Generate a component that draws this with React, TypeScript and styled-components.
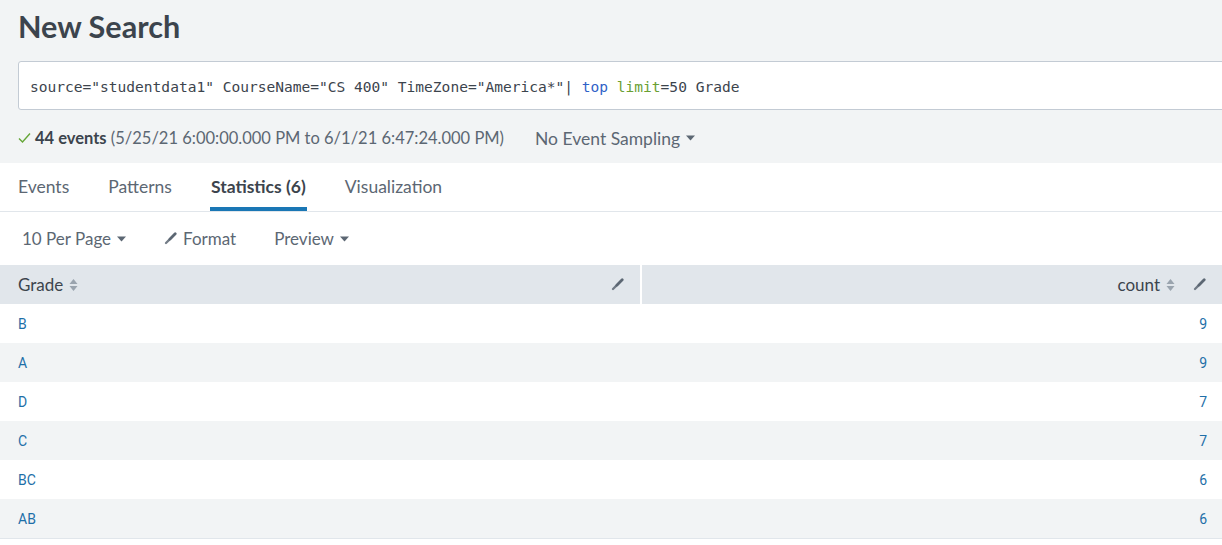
import { Fragment } from 'react';
import { createGlobalStyle, styled } from 'styled-components';

const colors = {
  text: '#3c444d',
  muted: '#5c6773',
  panel: '#f2f4f5',
  header: '#e1e6eb',
  border: '#c3cbd4',
  link: '#1e6fa8',
  accent: '#1a77b5',
  green: '#65a637',
};

const GlobalStyle = createGlobalStyle`
  html, body {
    margin: 0;
    padding: 0;
    background: #fff;
    overflow: hidden;
  }
  body {
    font-family: Lato, "Open Sans", sans-serif;
    color: ${colors.text};
  }
`;

const Page = styled.div`
  width: 1222px;
  overflow: hidden;
`;

const Top = styled.header`
  background: ${colors.panel};
  padding: 8px 0 0 18px;
  height: 155px;
`;

const Title = styled.h1`
  margin: 0;
  font-size: 30.6px;
  font-weight: 700;
  line-height: 38px;
  color: ${colors.text};
`;

const SearchBox = styled.div`
  margin-top: 15px;
  width: 1260px;
  height: 49px;
  box-sizing: border-box;
  background: #fff;
  border: 1px solid ${colors.border};
  border-radius: 3px;
  display: flex;
  align-items: center;
  padding-left: 11px;
  font-family: "DejaVu Sans Mono", monospace;
  font-size: 14.55px;
  color: ${colors.text};
`;

const Query = styled.span`
  white-space: pre;
  padding-top: 1px;
`;

const Token = styled.span<{ $kind: 'cmd' | 'arg' }>`
  color: ${(p) => (p.$kind === 'cmd' ? '#2f62c8' : '#6aa033')};
`;

const Status = styled.div`
  display: flex;
  align-items: center;
  height: 52px;
  padding-top: 2px;
  font-size: 16.5px;
  color: ${colors.muted};
`;

const Summary = styled.span`
  display: flex;
  align-items: center;
  gap: 4px;

  b {
    color: ${colors.text};
    font-weight: 700;
  }
`;

const Sampling = styled.span`
  margin-left: 31px;
  display: flex;
  align-items: center;
  gap: 6px;
  font-size: 17.5px;
`;

const Tabs = styled.nav`
  display: flex;
  height: 48px;
  border-bottom: 1px solid ${colors.header};
  padding-left: 18px;
  gap: 39px;
`;

const Tab = styled.div<{ $active?: boolean }>`
  display: flex;
  align-items: center;
  position: relative;
  font-size: 17.5px;
  color: ${(p) => (p.$active ? colors.text : colors.muted)};
  font-weight: ${(p) => (p.$active ? 700 : 400)};
  padding-bottom: 2px;

  &::after {
    content: '';
    display: ${(p) => (p.$active ? 'block' : 'none')};
    position: absolute;
    left: -1px;
    right: -1px;
    bottom: 0;
    height: 4px;
    background: ${colors.accent};
  }
`;

const Toolbar = styled.div`
  display: flex;
  align-items: center;
  height: 53px;
  padding-left: 22px;
  gap: 38px;
`;

const ToolButton = styled.div`
  display: flex;
  align-items: center;
  gap: 6px;
  font-size: 17px;
  color: ${colors.muted};
`;

const Table = styled.div`
  display: grid;
  grid-template-columns: 640px 1fr;
  border-bottom: 1px solid ${colors.header};
`;

const HeadCell = styled.div<{ $right?: boolean }>`
  display: flex;
  align-items: center;
  height: 39px;
  background: ${colors.header};
  font-size: 17px;
  color: ${colors.text};
  padding: 0 16px 0 18px;
  gap: 18px;
  justify-content: ${(p) => (p.$right ? 'flex-end' : 'space-between')};
  border-left: ${(p) => (p.$right ? '2px solid #fff' : 'none')};
`;

const HeadLabel = styled.span`
  display: flex;
  align-items: center;
  gap: 6px;
`;

const Cell = styled.div<{ $odd: boolean; $right?: boolean }>`
  height: 39px;
  display: flex;
  align-items: center;
  justify-content: ${(p) => (p.$right ? 'flex-end' : 'flex-start')};
  padding: 0 15px 0 18px;
  background: ${(p) => (p.$odd ? colors.panel : '#fff')};
  font-family: Roboto, "Open Sans", sans-serif;
  font-size: 14px;
  color: ${colors.link};
`;

const Caret = () => (
  <svg width="9" height="6" viewBox="0 0 9 6">
    <path d="M0 0.5h9L4.5 5.5z" fill={colors.muted} />
  </svg>
);

const Brush = () => (
  <svg width="13" height="13" viewBox="0 0 13 13">
    <path d="M11.2 1.8 L5.8 7.2" stroke={colors.muted} strokeWidth="2.8" strokeLinecap="round" />
    <path d="M4.9 8.1 L2 11" stroke={colors.muted} strokeWidth="2.2" strokeLinecap="round" opacity="0.85" />
  </svg>
);

const Sort = () => (
  <svg width="9" height="14" viewBox="0 0 9 14">
    <path d="M4.5 1 L8.5 6 H0.5 Z" fill="#9aa4ae" />
    <path d="M4.5 13 L8.5 8 H0.5 Z" fill="#9aa4ae" />
  </svg>
);

const Check = () => (
  <svg width="13" height="12" viewBox="0 0 13 12">
    <path d="M1 6.5 L4.5 10 L12 1.5" stroke={colors.green} strokeWidth="1.4" fill="none" />
  </svg>
);

const rows = [
  { grade: 'B', count: 9 },
  { grade: 'A', count: 9 },
  { grade: 'D', count: 7 },
  { grade: 'C', count: 7 },
  { grade: 'BC', count: 6 },
  { grade: 'AB', count: 6 },
];

export default function App() {
  return (
    <Page>
      <GlobalStyle />
      <Top>
        <Title>New Search</Title>
        <SearchBox>
          <Query>
            {'source="studentdata1" CourseName="CS 400" TimeZone="America*"| '}
            <Token $kind="cmd">top</Token>{' '}
            <Token $kind="arg">limit</Token>
            {'=50 Grade'}
          </Query>
        </SearchBox>
        <Status>
          <Summary>
            <Check />
            <span>
              <b>44 events</b> (5/25/21 6:00:00.000 PM to 6/1/21 6:47:24.000 PM)
            </span>
          </Summary>
          <Sampling>
            No Event Sampling <Caret />
          </Sampling>
        </Status>
      </Top>
      <Tabs>
        <Tab>Events</Tab>
        <Tab>Patterns</Tab>
        <Tab $active>Statistics (6)</Tab>
        <Tab>Visualization</Tab>
      </Tabs>
      <Toolbar>
        <ToolButton>
          10 Per Page <Caret />
        </ToolButton>
        <ToolButton>
          <Brush /> Format
        </ToolButton>
        <ToolButton>
          Preview <Caret />
        </ToolButton>
      </Toolbar>
      <Table>
        <HeadCell>
          <HeadLabel>
            Grade <Sort />
          </HeadLabel>
          <Brush />
        </HeadCell>
        <HeadCell $right>
          <HeadLabel>
            count <Sort />
          </HeadLabel>
          <Brush />
        </HeadCell>
        {rows.map((r, i) => (
          <Fragment key={r.grade}>
            <Cell $odd={i % 2 === 1}>{r.grade}</Cell>
            <Cell $odd={i % 2 === 1} $right>
              {r.count}
            </Cell>
          </Fragment>
        ))}
      </Table>
    </Page>
  );
}
